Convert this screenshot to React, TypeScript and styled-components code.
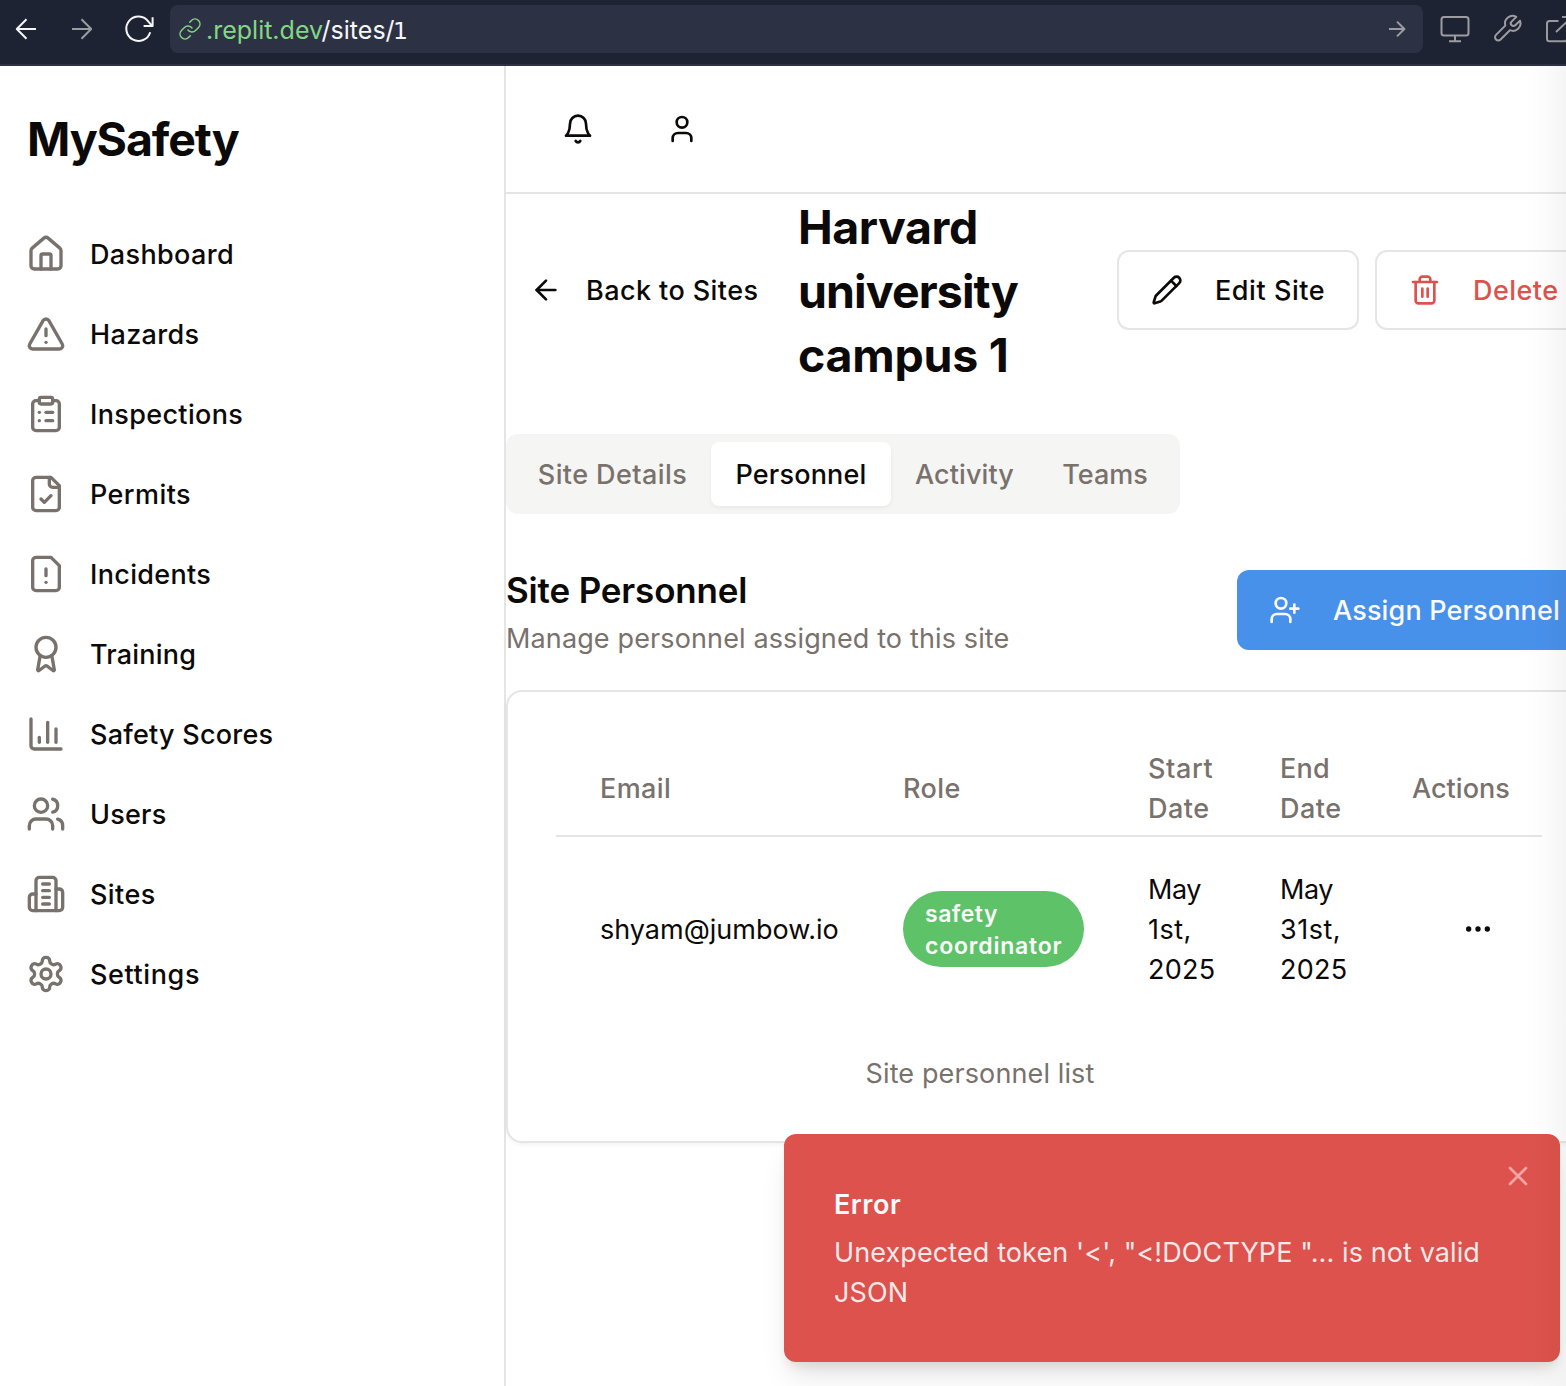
import React from "react";
import styled, { createGlobalStyle, css } from "styled-components";

/* ---------- theme values ---------- */

const ink = "#0c0a09";
const muted = "#78716c";
const line = "#e5e5e5";
const danger = "#dd524c";
const primary = "#4891eb";
const chrome = "#1e2333";
const chromeRaised = "#2d3144";

const GlobalStyle = createGlobalStyle`
  *, *::before, *::after { box-sizing: border-box; }
  html, body { margin: 0; padding: 0; }
  body {
    background: #fff;
    color: ${ink};
    font-family: Inter, "Liberation Sans", sans-serif;
    font-size: 27px;
    line-height: 40px;
    overflow: hidden;
  }
  h1, h2, p { margin: 0; }
  button { font: inherit; color: inherit; background: none; border: 0; padding: 0; }
`;

/* ---------- icons ---------- */

type Shape = React.ReactNode;

const shapes: Record<string, Shape> = {
  home: (
    <>
      <path d="M15 21v-8a1 1 0 0 0-1-1h-4a1 1 0 0 0-1 1v8" />
      <path d="M3 10a2 2 0 0 1 .709-1.528l7-5.999a2 2 0 0 1 2.582 0l7 5.999A2 2 0 0 1 21 10v9a2 2 0 0 1-2 2H5a2 2 0 0 1-2-2z" />
    </>
  ),
  hazard: (
    <>
      <path d="m21.73 18-8-14a2 2 0 0 0-3.48 0l-8 14A2 2 0 0 0 4 21h16a2 2 0 0 0 1.73-3" />
      <path d="M12 9v4" />
      <path d="M12 17h.01" />
    </>
  ),
  clipboard: (
    <>
      <rect width="8" height="4" x="8" y="2" rx="1" ry="1" />
      <path d="M16 4h2a2 2 0 0 1 2 2v14a2 2 0 0 1-2 2H6a2 2 0 0 1-2-2V6a2 2 0 0 1 2-2h2" />
      <path d="M12 11h4" />
      <path d="M12 16h4" />
      <path d="M8 11h.01" />
      <path d="M8 16h.01" />
    </>
  ),
  fileCheck: (
    <>
      <path d="M15 2H6a2 2 0 0 0-2 2v16a2 2 0 0 0 2 2h12a2 2 0 0 0 2-2V7Z" />
      <path d="M14 2v4a2 2 0 0 0 2 2h4" />
      <path d="m9 15 2 2 4-4" />
    </>
  ),
  fileWarning: (
    <>
      <path d="M15 2H6a2 2 0 0 0-2 2v16a2 2 0 0 0 2 2h12a2 2 0 0 0 2-2V7Z" />
      <path d="M12 9v4" />
      <path d="M12 17h.01" />
    </>
  ),
  award: (
    <>
      <path d="m15.477 12.89 1.515 8.526a.5.5 0 0 1-.81.47l-3.58-2.687a1 1 0 0 0-1.197 0l-3.586 2.686a.5.5 0 0 1-.81-.469l1.514-8.526" />
      <circle cx="12" cy="8" r="6" />
    </>
  ),
  chart: (
    <>
      <path d="M3 3v16a2 2 0 0 0 2 2h16" />
      <path d="M18 17V9" />
      <path d="M13 17V5" />
      <path d="M8 17v-3" />
    </>
  ),
  users: (
    <>
      <path d="M16 21v-2a4 4 0 0 0-4-4H6a4 4 0 0 0-4 4v2" />
      <circle cx="9" cy="7" r="4" />
      <path d="M22 21v-2a4 4 0 0 0-3-3.87" />
      <path d="M16 3.13a4 4 0 0 1 0 7.75" />
    </>
  ),
  building: (
    <>
      <path d="M6 22V4a2 2 0 0 1 2-2h8a2 2 0 0 1 2 2v18Z" />
      <path d="M6 12H4a2 2 0 0 0-2 2v6a2 2 0 0 0 2 2h2" />
      <path d="M18 9h2a2 2 0 0 1 2 2v9a2 2 0 0 1-2 2h-2" />
      <path d="M10 6h4" />
      <path d="M10 10h4" />
      <path d="M10 14h4" />
      <path d="M10 18h4" />
    </>
  ),
  settings: (
    <>
      <path d="M12.22 2h-.44a2 2 0 0 0-2 2v.18a2 2 0 0 1-1 1.73l-.43.25a2 2 0 0 1-2 0l-.15-.08a2 2 0 0 0-2.73.73l-.22.38a2 2 0 0 0 .73 2.73l.15.1a2 2 0 0 1 1 1.72v.51a2 2 0 0 1-1 1.74l-.15.09a2 2 0 0 0-.73 2.73l.22.38a2 2 0 0 0 2.73.73l.15-.08a2 2 0 0 1 2 0l.43.25a2 2 0 0 1 1 1.73V20a2 2 0 0 0 2 2h.44a2 2 0 0 0 2-2v-.18a2 2 0 0 1 1-1.73l.43-.25a2 2 0 0 1 2 0l.15.08a2 2 0 0 0 2.73-.73l.22-.39a2 2 0 0 0-.73-2.73l-.15-.08a2 2 0 0 1-1-1.74v-.5a2 2 0 0 1 1-1.74l.15-.09a2 2 0 0 0 .73-2.73l-.22-.38a2 2 0 0 0-2.73-.73l-.15.08a2 2 0 0 1-2 0l-.43-.25a2 2 0 0 1-1-1.73V4a2 2 0 0 0-2-2z" />
      <circle cx="12" cy="12" r="3" />
    </>
  ),
  bell: (
    <>
      <path d="M6 8a6 6 0 0 1 12 0c0 7 3 9 3 9H3s3-2 3-9" />
      <path d="M10.3 21a1.94 1.94 0 0 0 3.4 0" />
    </>
  ),
  user: (
    <>
      <path d="M19 21v-2a4 4 0 0 0-4-4H9a4 4 0 0 0-4 4v2" />
      <circle cx="12" cy="7" r="4" />
    </>
  ),
  arrowLeft: (
    <>
      <path d="m12 19-7-7 7-7" />
      <path d="M19 12H5" />
    </>
  ),
  pencil: (
    <>
      <path d="M21.174 6.812a1 1 0 0 0-3.986-3.987L3.842 16.174a2 2 0 0 0-.5.83l-1.321 4.352a.5.5 0 0 0 .623.622l4.353-1.32a2 2 0 0 0 .83-.497z" />
      <path d="m15 5 4 4" />
    </>
  ),
  trash: (
    <>
      <path d="M3 6h18" />
      <path d="M19 6v14c0 1-1 2-2 2H7c-1 0-2-1-2-2V6" />
      <path d="M8 6V4c0-1 1-2 2-2h4c1 0 2 1 2 2v2" />
      <path d="M10 11v6" />
      <path d="M14 11v6" />
    </>
  ),
  userPlus: (
    <>
      <path d="M16 21v-2a4 4 0 0 0-4-4H6a4 4 0 0 0-4 4v2" />
      <circle cx="9" cy="7" r="4" />
      <path d="M19 8v6" />
      <path d="M22 11h-6" />
    </>
  ),
  more: (
    <>
      <circle cx="12" cy="12" r="1" />
      <circle cx="19" cy="12" r="1" />
      <circle cx="5" cy="12" r="1" />
    </>
  ),
  close: (
    <>
      <path d="M18 6 6 18" />
      <path d="m6 6 12 12" />
    </>
  ),
};

const Svg = styled.svg<{ $size: number }>`
  display: block;
  flex: none;
  width: ${(p) => p.$size}px;
  height: ${(p) => p.$size}px;
  fill: none;
  stroke: currentColor;
  stroke-width: 2;
  stroke-linecap: round;
  stroke-linejoin: round;
`;

const Icon = ({ name, size = 32 }: { name: string; size?: number }) => (
  <Svg viewBox="0 0 24 24" $size={size} aria-hidden>
    {shapes[name]}
  </Svg>
);

/* Browser toolbar glyphs are drawn on a 32px grid with square ends. */
const ToolSvg = styled.svg<{ $dim?: boolean }>`
  display: block;
  flex: none;
  width: 32px;
  height: 32px;
  fill: none;
  stroke: ${(p) => (p.$dim ? "#9c9da1" : "#f5f6f8")};
  stroke-width: 2;
  stroke-linejoin: round;
`;

const LinkSvg = styled.svg`
  display: block;
  flex: none;
  width: 24px;
  height: 24px;
  fill: none;
  stroke: #83d783;
  stroke-width: 1.5;
  stroke-linecap: round;
`;

/* ---------- browser toolbar ---------- */

const Page = styled.div`
  position: relative;
  display: flex;
  flex-direction: column;
  width: 1566px;
  height: 1386px;
  overflow: hidden;
`;

const Toolbar = styled.header`
  display: flex;
  flex: none;
  align-items: flex-start;
  height: 66px;
  padding: 5px 0 0 10px;
  background: ${chrome};
  border-bottom: 2px solid ${chromeRaised};
`;

const HistoryButtons = styled.div`
  display: flex;
  flex: none;
  align-items: center;
  gap: 24px;
  height: 48px;
  width: 160px;
`;

const AddressBar = styled.div`
  display: flex;
  flex: none;
  align-items: center;
  width: 1253px;
  height: 48px;
  padding: 0 10px 0 8px;
  border-radius: 8px;
  background: ${chromeRaised};
`;

const Url = styled.span`
  flex: 1;
  margin: 2px 0 0 4px;
  font-size: 25px;
  letter-spacing: 0;
  color: #f5f6f8;
`;

const Host = styled.span`
  color: #83d783;
`;

const UrlDigit = styled.span`
  margin-left: -1.5px;
  font-family: "DejaVu Sans", sans-serif;
  font-size: 23.5px;
  line-height: 1;
`;

const Tools = styled.div`
  display: flex;
  flex: none;
  align-items: center;
  gap: 20px;
  height: 48px;
  padding-left: 16px;
`;

/* ---------- sidebar ---------- */

const Body = styled.div`
  display: flex;
  flex: 1;
  min-height: 0;
`;

const Sidebar = styled.aside`
  flex: none;
  width: 506px;
  padding: 41px 26px 0;
  border-right: 2px solid ${line};
`;

const heading = css`
  font-size: 46.5px;
  line-height: 64px;
  font-weight: 700;
`;

const Brand = styled.h1`
  ${heading}
  padding-left: 1px;
  letter-spacing: -1.1px;
`;

const Nav = styled.nav`
  display: flex;
  flex-direction: column;
  margin-top: 43px;
`;

const NavItem = styled.a`
  display: flex;
  align-items: center;
  gap: 24px;
  height: 80px;
  font-weight: 500;
  color: ${muted};
`;

const Label = styled.span<{ $track?: number; $color?: string }>`
  display: inline-block;
  transform: translateY(1px);
  letter-spacing: ${(p) => p.$track ?? 0.3}px;
  ${(p) => p.$color && `color: ${p.$color};`}
  white-space: nowrap;
`;

/* ---------- main column ---------- */

const Main = styled.main`
  flex: none;
  width: 1086px;
`;

const TopNav = styled.div`
  display: flex;
  align-items: center;
  gap: 24px;
  height: 128px;
  padding-left: 32px;
  border-bottom: 2px solid ${line};
`;

const IconButton = styled.button<{ $width?: number }>`
  display: flex;
  align-items: center;
  justify-content: center;
  width: ${(p) => p.$width ?? 80}px;
  height: 80px;
`;

const TitleRow = styled.div`
  display: flex;
  align-items: center;
  height: 192px;
`;

const Button = styled.button<{ $kind: "ghost" | "outline" | "primary"; $danger?: boolean }>`
  display: flex;
  flex: none;
  align-items: center;
  gap: 32px;
  height: 80px;
  padding: 0 32px;
  border-radius: 12px;
  font-weight: 500;
  ${(p) => p.$kind === "ghost" && css`width: 276px; padding: 0 24px; gap: 24px;`}
  ${(p) => p.$kind === "outline" && css`border: 2px solid ${line};`}
  ${(p) => p.$kind === "primary" && css`width: 355px; background: ${primary}; color: #fafafa;`}
  ${(p) => p.$danger && css`color: ${danger};`}
`;

const Title = styled.h1`
  ${heading}
  flex: 1;
  padding: 2px 60px 0 0;
  margin-left: 16px;
`;

const TitleLine = styled.span<{ $track: number }>`
  display: block;
  letter-spacing: ${(p) => p.$track}px;
`;

const Actions = styled.div`
  display: flex;
  gap: 16px;

  > :first-child { width: 242px; }
  > :last-child { width: 217px; }
`;

const Tabs = styled.div`
  display: flex;
  width: 674px;
  height: 80px;
  margin-top: 48px;
  padding: 8px;
  border-radius: 12px;
  background: #f5f5f4;
`;

const Tab = styled.button<{ $width: number; $active?: boolean }>`
  width: ${(p) => p.$width}px;
  height: 64px;
  border-radius: 8px;
  font-weight: 500;
  text-align: center;
  color: ${muted};
  ${(p) =>
    p.$active &&
    css`
      color: ${ink};
      background: #fff;
      box-shadow: 0 2px 4px rgba(0, 0, 0, 0.05);
    `}
`;

const SectionHead = styled.div`
  display: flex;
  align-items: center;
  justify-content: space-between;
  height: 96px;
  margin-top: 48px;
`;

const SectionTitle = styled.h2`
  font-size: 35px;
  line-height: 56px;
  font-weight: 600;
  letter-spacing: -0.16px;
`;

const SectionText = styled.p`
  color: ${muted};
`;

const Card = styled.section`
  margin-top: 32px;
  height: 453px;
  padding: 48px 48px 0;
  border: 2px solid ${line};
  border-radius: 16px;
  box-shadow: 0 2px 4px rgba(0, 0, 0, 0.05);
`;

const row = css`
  display: grid;
  grid-template-columns: 303px 245px 132px 132px 1fr;
  align-items: center;
  padding-left: 44px;
  padding-right: 32px;
`;

const HeadRow = styled.div`
  ${row}
  height: 97px;
  border-bottom: 2px solid ${line};
  color: ${muted};
  font-weight: 500;
`;

const DataRow = styled.div`
  ${row}
  height: 184px;
`;

const Cell = styled.div<{ $end?: boolean }>`
  display: flex;
  flex-direction: column;
  align-items: ${(p) => (p.$end ? "flex-end" : "flex-start")};
`;

const Badge = styled.div`
  display: flex;
  flex-direction: column;
  width: 181px;
  padding: 6px 22px;
  border-radius: 38px;
  background: #5ec269;
  color: #fafafa;
  font-size: 23px;
  line-height: 32px;
  font-weight: 600;
`;

const Caption = styled.p`
  width: 848px;
  margin-top: 32px;
  text-align: center;
  color: ${muted};
`;

/* ---------- overlays ---------- */

const Toast = styled.div`
  position: absolute;
  left: 784px;
  top: 1134px;
  display: flex;
  flex-direction: column;
  gap: 8px;
  width: 776px;
  height: 228px;
  padding: 50px;
  border-radius: 12px;
  background: ${danger};
  color: #fafafa;
  box-shadow: 0 20px 30px -6px rgba(0, 0, 0, 0.1), 0 8px 12px -4px rgba(0, 0, 0, 0.1);
`;

const ToastTitle = styled.div`
  font-weight: 600;
`;

const ToastText = styled.div`
  display: flex;
  flex-direction: column;
  opacity: 0.9;
`;

const ToastClose = styled.button`
  position: absolute;
  top: 26px;
  right: 26px;
  color: #f1a5a2;
`;

const EdgeShade = styled.div`
  position: absolute;
  top: 0;
  right: 0;
  bottom: 0;
  width: 42px;
  background: linear-gradient(to right, rgba(0, 0, 0, 0), rgba(0, 0, 0, 0.01) 45%, rgba(0, 0, 0, 0.038));
  pointer-events: none;
`;

/* ---------- data ---------- */

const nav = [
  { icon: "home", text: "Dashboard", track: 0.35 },
  { icon: "hazard", text: "Hazards", track: 0.35 },
  { icon: "clipboard", text: "Inspections", track: 0.35 },
  { icon: "fileCheck", text: "Permits", track: 0.42 },
  { icon: "fileWarning", text: "Incidents", track: 0.32 },
  { icon: "award", text: "Training", track: 0.2 },
  { icon: "chart", text: "Safety Scores", track: 0.23 },
  { icon: "users", text: "Users", track: 0.2 },
  { icon: "building", text: "Sites", track: 0.42 },
  { icon: "settings", text: "Settings", track: 0.6 },
];

const tabs = [
  { text: "Site Details", width: 197, track: 0.42 },
  { text: "Personnel", width: 180, track: 0.2, active: true },
  { text: "Activity", width: 147, track: 0.1 },
  { text: "Teams", width: 134, track: 0 },
];

export default function App() {
  return (
    <>
      <GlobalStyle />
      <Page>
        <Toolbar>
          <HistoryButtons>
            <ToolSvg viewBox="0 0 32 32">
              <path d="M26 16H7M16.5 6.3 6.8 16l9.7 9.7" />
            </ToolSvg>
            <ToolSvg viewBox="0 0 32 32" $dim>
              <path d="M6 16h19M15.5 6.3 25.2 16l-9.7 9.7" />
            </ToolSvg>
            <ToolSvg viewBox="0 0 32 32">
              <path d="M28.2 19.2A12.2 12.2 0 1 1 26.4 8.6l3.6 4.3M30.6 4.2v8.9h-9" />
            </ToolSvg>
          </HistoryButtons>
          <AddressBar>
            <LinkSvg viewBox="0 0 24 24">
              <path d="M10 13a5 5 0 0 0 7.54.54l3-3a5 5 0 0 0-7.07-7.07l-1.72 1.71" />
              <path d="M14 11a5 5 0 0 0-7.54-.54l-3 3a5 5 0 0 0 7.07 7.07l1.71-1.71" />
            </LinkSvg>
            <Url>
              <Host>.replit.dev</Host>/sites/<UrlDigit>1</UrlDigit>
            </Url>
            <ToolSvg viewBox="0 0 32 32" $dim>
              <path d="M8 16h15M16 8.6 23.4 16 16 23.4" />
            </ToolSvg>
          </AddressBar>
          <Tools>
            <ToolSvg viewBox="0 0 32 32" $dim>
              <rect x="2.5" y="4" width="27" height="18.5" rx="2.5" />
              <path d="M16 22.5v5M10 28.2h12" />
            </ToolSvg>
            <ToolSvg viewBox="-1 0 32 32" $dim>
              <path d="M24.3 3.9 19.6 8.6a2.6 2.6 0 0 0 3.7 3.7l4.7-4.7a7.6 7.6 0 0 1-10.1 9.6L8.6 26.5a3.2 3.2 0 0 1-4.6-4.6l9.3-9.3A7.6 7.6 0 0 1 24.3 3.9z" />
            </ToolSvg>
            <ToolSvg viewBox="0 0 32 32" $dim>
              <path d="M15.5 8h-9A2.5 2.5 0 0 0 4 10.500v15.200a2.500 2.500 0 0 0 2.500 2.500h15a2.500 2.500 0 0 0 2.500-2.500V17M19 4h10v10M29 4 13 19" />
            </ToolSvg>
          </Tools>
        </Toolbar>

        <Body>
          <Sidebar>
            <Brand>MySafety</Brand>
            <Nav>
              {nav.map((item) => (
                <NavItem key={item.text}>
                  <Icon name={item.icon} size={40} />
                  <Label $track={item.track} $color={ink}>
                    {item.text}
                  </Label>
                </NavItem>
              ))}
            </Nav>
          </Sidebar>

          <Main>
            <TopNav>
              <IconButton>
                <Icon name="bell" />
              </IconButton>
              <IconButton>
                <Icon name="user" />
              </IconButton>
            </TopNav>

            <TitleRow>
              <Button $kind="ghost">
                <Icon name="arrowLeft" />
                <Label $track={0.42}>Back to Sites</Label>
              </Button>
              <Title>
                <TitleLine $track={-0.45}>Harvard</TitleLine>
                <TitleLine $track={-0.9}>university</TitleLine>
                <TitleLine $track={-0.25}>campus 1</TitleLine>
              </Title>
              <Actions>
                <Button $kind="outline">
                  <Icon name="pencil" />
                  <Label $track={0.55}>Edit Site</Label>
                </Button>
                <Button $kind="outline" $danger>
                  <Icon name="trash" />
                  <Label $track={0.45}>Delete</Label>
                </Button>
              </Actions>
            </TitleRow>

            <Tabs>
              {tabs.map((tab) => (
                <Tab key={tab.text} $width={tab.width} $active={tab.active}>
                  <Label $track={tab.track}>{tab.text}</Label>
                </Tab>
              ))}
            </Tabs>

            <SectionHead>
              <div>
                <SectionTitle>Site Personnel</SectionTitle>
                <SectionText>
                  <Label $track={0.13}>Manage personnel assigned to this site</Label>
                </SectionText>
              </div>
              <Button $kind="primary">
                <Icon name="userPlus" />
                <Label $track={0.15}>Assign Personnel</Label>
              </Button>
            </SectionHead>

            <Card>
              <HeadRow>
                <Label $track={0.4}>Email</Label>
                <Label $track={0.4}>Role</Label>
                <Cell>
                  <Label $track={0.6}>Start</Label>
                  <Label $track={0.5}>Date</Label>
                </Cell>
                <Cell>
                  <Label $track={0.3}>End</Label>
                  <Label $track={0.5}>Date</Label>
                </Cell>
                <Label $track={0.03}>Actions</Label>
              </HeadRow>
              <DataRow>
                <Label $track={0}>shyam@jumbow.io</Label>
                <Badge>
                  <Label $track={0.5}>safety</Label>
                  <Label $track={0.8}>coordinator</Label>
                </Badge>
                <Cell>
                  <Label $track={-0.4}>May</Label>
                  <Label $track={0.5}>1st,</Label>
                  <Label $track={0.25}>2025</Label>
                </Cell>
                <Cell>
                  <Label $track={-0.4}>May</Label>
                  <Label $track={0.5}>31st,</Label>
                  <Label $track={0.25}>2025</Label>
                </Cell>
                <Cell $end>
                  <IconButton $width={64}>
                    <Icon name="more" />
                  </IconButton>
                </Cell>
              </DataRow>
              <Caption>
                <Label $track={0.12}>Site personnel list</Label>
              </Caption>
            </Card>
          </Main>
        </Body>

        <Toast>
          <ToastTitle>
            <Label $track={0.5}>Error</Label>
          </ToastTitle>
          <ToastText>
            <Label $track={0.1}>Unexpected token '&lt;', "&lt;!DOCTYPE "... is not valid</Label>
            <Label $track={0.1}>JSON</Label>
          </ToastText>
          <ToastClose>
            <Icon name="close" />
          </ToastClose>
        </Toast>
        <EdgeShade />
      </Page>
    </>
  );
}
